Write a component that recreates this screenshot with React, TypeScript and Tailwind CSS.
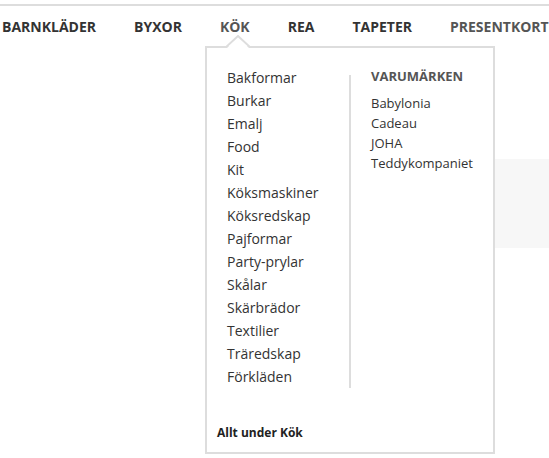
import React from "react";

const items = [
  "Bakformar",
  "Burkar",
  "Emalj",
  "Food",
  "Kit",
  "Köksmaskiner",
  "Köksredskap",
  "Pajformar",
  "Party-prylar",
  "Skålar",
  "Skärbrädor",
  "Textilier",
  "Träredskap",
  "Förkläden",
];

const brands = ["Babylonia", "Cadeau", "JOHA", "Teddykompaniet"];

const nav: { label: string; muted?: boolean }[] = [
  { label: "BARNKLÄDER" },
  { label: "BYXOR" },
  { label: "KÖK", muted: true },
  { label: "REA" },
  { label: "TAPETER" },
  { label: "PRESENTKORT", muted: true },
];

export default function App() {
  return (
    <div className="relative w-[549px] h-[458px] overflow-hidden bg-white font-['Open_Sans',sans-serif] text-[#333]">
      <div className="mt-[4px] h-[2px] bg-[#dddddd]" />
      <nav className="flex h-[40px] items-center gap-[38px] pl-[2px] pt-[2px] whitespace-nowrap">
        {nav.map((n) => (
          <span
            key={n.label}
            className={`shrink-0 text-[14px] font-bold leading-[20px] ${n.muted ? "text-[#555]" : "text-[#333]"}`}
          >
            {n.label}
          </span>
        ))}
      </nav>
      <div className="ml-[300px] mt-[113px] h-[89px] bg-[#f7f7f7]" />

      <div className="absolute left-[205px] top-[46px] h-[408px] w-[290px] border-2 border-[#dddddd] bg-white">
        <svg
          className="absolute left-[19px] top-[-13px]"
          width="24"
          height="14"
          viewBox="0 0 24 14"
        >
          <polygon points="1,13 12,2 23,13" fill="#fff" />
          <polyline points="0,12 12,1 24,12" fill="none" stroke="#dddddd" strokeWidth="2" />
        </svg>
        <div className="flex pt-[18px]">
          <ul className="w-[142px] pl-[20px]">
            {items.map((i) => (
              <li key={i} className="text-[14px] leading-[23px] text-[#333]">
                {i}
              </li>
            ))}
          </ul>
          <div className="mt-[9px] w-[2px] self-stretch bg-[#dddddd]" />
          <div className="pl-[20px]">
            <div className="text-[13px] font-bold leading-[20px] text-[#555]">VARUMÄRKEN</div>
            <ul className="mt-[7px]">
              {brands.map((b) => (
                <li key={b} className="text-[13px] leading-[20px] text-[#333]">
                  {b}
                </li>
              ))}
            </ul>
          </div>
        </div>
        <div className="mt-[37px] pl-[10px] text-[12px] font-bold leading-[16px] text-[#222]">
          Allt under Kök
        </div>
      </div>
    </div>
  );
}
